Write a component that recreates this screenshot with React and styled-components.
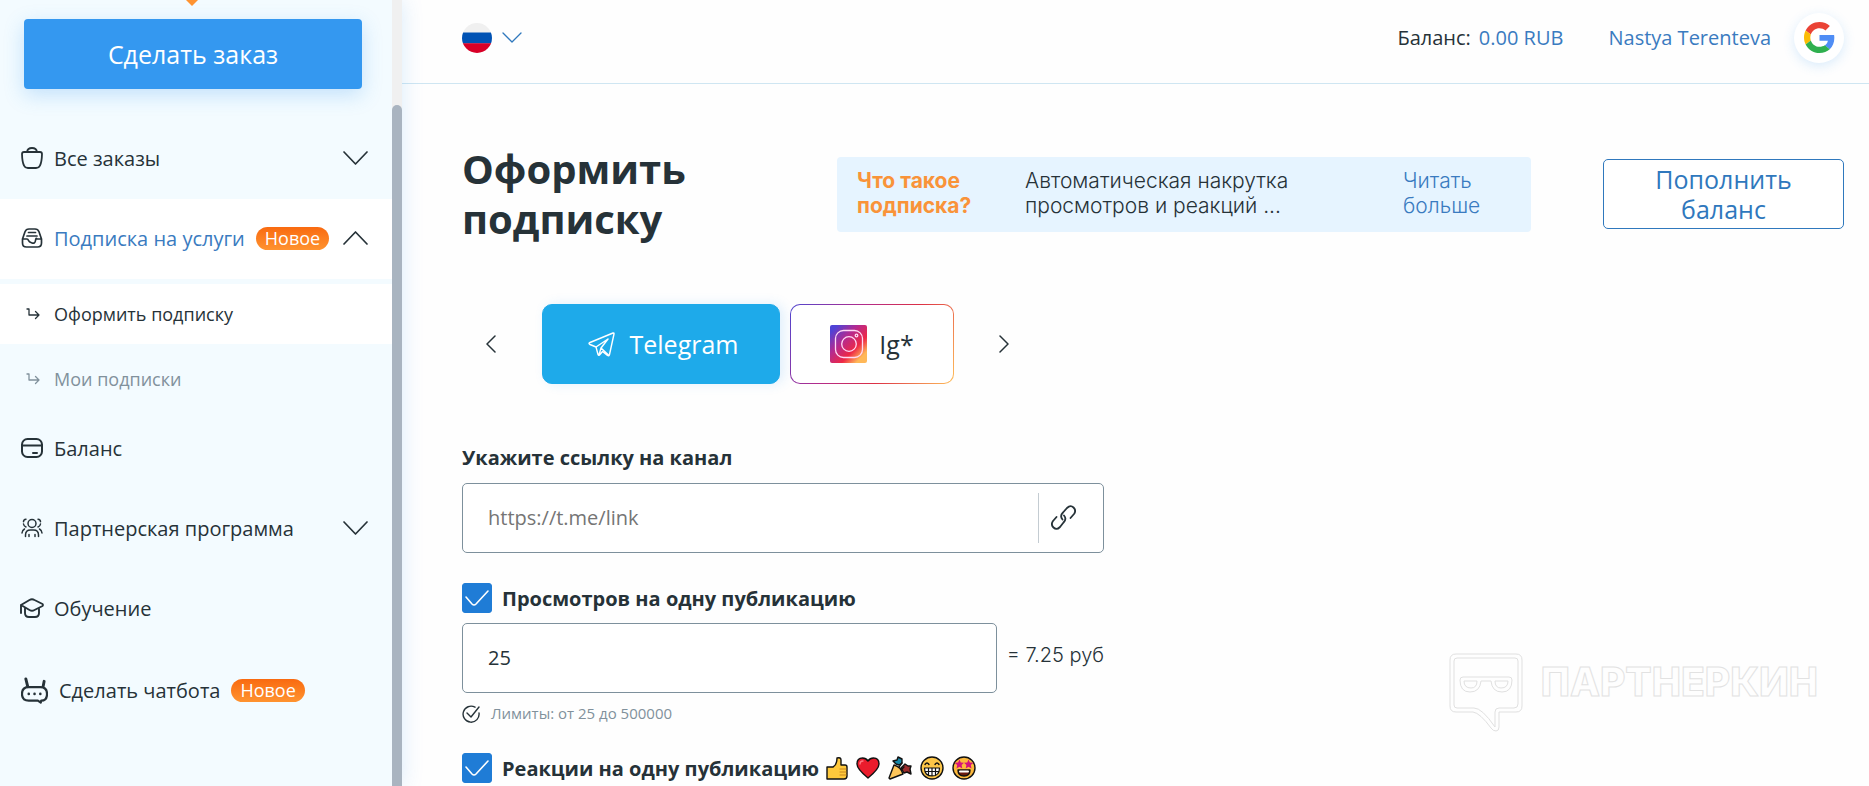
import styled, { createGlobalStyle } from 'styled-components'

const GlobalStyle = createGlobalStyle`
  *, *::before, *::after { box-sizing: border-box; }
  body {
    margin: 0;
    background: #fefefe;
    color: #263238;
    font-family: 'Open Sans', 'Noto Sans', sans-serif;
    font-size: 20px;
    font-weight: 400;
    line-height: 25px;
  }
  button, input { font: inherit; color: inherit; }
  button { cursor: pointer; }
  a { color: inherit; text-decoration: none; }
  svg { display: block; flex: none; }
`

const Page = styled.div`
  display: flex;
  height: 100vh;
  overflow: hidden;
`

/* sidebar */

const Sidebar = styled.aside`
  position: relative;
  flex: none;
  display: flex;
  background: #f3fbff;
  box-shadow: 0 0 20px rgba(52, 152, 240, 0.18);
`

const SidebarBody = styled.div`
  width: 392px;
`

const LogoTip = styled.svg`
  margin: 0 auto 13px;
`

const OrderButton = styled.button`
  display: block;
  width: 338px;
  height: 70px;
  margin: 0 24px 30px;
  padding: 0;
  border: 0;
  border-radius: 4px;
  background: #3498f0;
  color: #fff;
  font-size: 25px;
  box-shadow: 0 6px 20px rgba(52, 152, 240, 0.25);
`

const NavItem = styled.a`
  display: flex;
  align-items: center;
  gap: 11px;
  height: ${({ $tall }) => ($tall ? 84 : 80)}px;
  padding: 0 24px 2px 21px;
  background: ${({ $active }) => ($active ? '#fff' : 'transparent')};
  color: ${({ $active }) => ($active ? '#3a7bc0' : '#263238')};
  white-space: nowrap;

  svg { color: #263238; }
`

const NavToggle = styled.span`
  margin-left: auto;
`

const SubNavItem = styled.a`
  display: flex;
  align-items: center;
  gap: 14px;
  height: 60px;
  margin-top: 5px;
  padding: 0 26px;
  background: ${({ $active }) => ($active ? '#fff' : 'transparent')};
  color: ${({ $active }) => ($active ? '#263238' : '#81919c')};
  font-size: 18px;
`

const Badge = styled.span`
  padding: 0 9px;
  border-radius: 12px;
  background: linear-gradient(#f96a10, #ff9330);
  color: #fff;
  font-size: 18px;
  line-height: 23px;
`

const ScrollTrack = styled.div`
  width: 10px;
  padding-top: 105px;
  background: #f0f0f0;
`

const ScrollThumb = styled.div`
  height: 100%;
  border-radius: 5px 5px 0 0;
  background: #a9b4c0;
`

/* main column */

const Main = styled.main`
  flex: 1;
  min-width: 0;
`

const TopBar = styled.header`
  display: flex;
  align-items: center;
  height: 84px;
  padding: 0 25px 8px 60px;
  border-bottom: 1px solid #cfe6f2;
`

const LangButton = styled.button`
  display: flex;
  align-items: center;
  gap: 10px;
  margin-right: auto;
  padding: 0;
  border: 0;
  background: none;
`

const BalanceLine = styled.span`
  display: flex;
  gap: 8px;
  margin-right: 45px;
`

const BlueLink = styled.a`
  color: #3a7bc0;
`

const Avatar = styled.a`
  display: grid;
  place-items: center;
  width: 50px;
  height: 50px;
  margin-left: 23px;
  border-radius: 50%;
  background: #fff;
  box-shadow: 0 3px 12px rgba(52, 152, 240, 0.18);
`

const Content = styled.div`
  padding: 60px 25px 0 60px;
`

const Heading = styled.div`
  display: flex;
  align-items: center;
  gap: 72px;
`

const Title = styled.h1`
  width: 303px;
  margin: 0;
  font-size: 40px;
  font-weight: 700;
  line-height: 50px;
`

const InfoBox = styled.div`
  flex: 1;
  display: flex;
  align-items: center;
  height: 75px;
  padding: 0 20px 2px;
  border-radius: 4px;
  background: #e6f4ff;
  font-family: Inter, 'Open Sans', sans-serif;
  font-size: 21px;
  font-weight: 300;
`

const InfoQuestion = styled.strong`
  width: 168px;
  padding-right: 30px;
  color: #f99339;
  font-weight: 700;
`

const InfoText = styled.span`
  width: 378px;
  padding-right: 80px;
`

const InfoLink = styled(BlueLink)`
  width: 90px;
`

const TopUpButton = styled.button`
  width: 241px;
  height: 70px;
  padding: 0 40px;
  border: 1px solid #2f78bd;
  border-radius: 5px;
  background: #fff;
  color: #2f78bd;
  font-size: 25px;
  line-height: 30px;
`

const Carousel = styled.div`
  display: flex;
  align-items: center;
  margin: 60px 0 61px;
  padding-left: 22px;
`

const ArrowButton = styled.button`
  display: grid;
  place-items: center;
  width: 14px;
  height: 40px;
  padding: 0;
  border: 0;
  background: none;
`

const Tabs = styled.div`
  display: flex;
  gap: 10px;
  margin: 0 43px 0 44px;
`

const Tab = styled.button`
  display: flex;
  align-items: center;
  justify-content: center;
  height: 80px;
  border: 1px solid transparent;
  border-radius: 10px;
  font-size: 25px;
`

const TelegramTab = styled(Tab)`
  gap: 15px;
  width: 238px;
  padding: 0 6px 0 10px;
  border-color: #1eaaea;
  background: #1eaaea;
  color: #fff;
  box-shadow: 4px 0 12px rgba(52, 152, 240, 0.15);
`

const InstagramTab = styled(Tab)`
  gap: 12px;
  width: 164px;
  background:
    linear-gradient(#fff, #fff) padding-box,
    linear-gradient(120deg, #4f46d0, #b22c8c 35%, #dc3045 62%, #ffc05a) border-box;
`

const Form = styled.form`
  width: 642px;
`

const FieldLabel = styled.label`
  display: block;
  margin-bottom: 13px;
  font-weight: 700;
`

const LinkField = styled.div`
  display: flex;
  align-items: center;
  height: 70px;
  border: 1px solid #7d909c;
  border-radius: 5px;
  background: #fff;
`

const LinkInput = styled.input`
  flex: 1;
  min-width: 0;
  height: 100%;
  padding: 0 25px 2px;
  border: 0;
  background: none;
  outline: none;

  &::placeholder { color: #757575; opacity: 1; }
`

const LinkButton = styled.button`
  height: 50px;
  padding: 0 27px 2px 12px;
  border: 0;
  border-left: 1px solid #c4ccd2;
  background: none;
`

const CheckRow = styled.label`
  display: flex;
  align-items: center;
  gap: 10px;
  margin-top: 30px;
  font-weight: 700;
`

const CheckBox = styled.span`
  display: grid;

  > * { grid-area: 1 / 1; }
  svg { pointer-events: none; }
`

const CheckInput = styled.input`
  appearance: none;
  width: 30px;
  height: 30px;
  margin: 0;
  border: 1px solid #1f7cd6;
  border-radius: 3px;

  &:checked { background: #1f7cd6; }
  &:not(:checked) + svg { visibility: hidden; }
`

const Emojis = styled.span`
  display: flex;
  gap: 8px;
  margin-left: -3px;
`

const CountRow = styled.div`
  display: flex;
  align-items: center;
  gap: 10px;
  margin-top: 10px;
`

const CountInput = styled.input`
  flex: 1;
  min-width: 0;
  height: 70px;
  padding: 0 25px 2px;
  border: 1px solid #7d909c;
  border-radius: 5px;
  background: #fff;
`

const Price = styled.output`
  padding-bottom: 5px;
  font-family: Inter, 'Open Sans', sans-serif;
  font-weight: 300;
`

const Limits = styled.div`
  display: flex;
  align-items: center;
  gap: 11px;
  margin: 10px 0 -1px;
  color: #81919c;
  font-size: 15px;
  line-height: 21px;
`

const Watermark = styled.div`
  position: absolute;
  right: 51px;
  bottom: 53px;
  display: flex;
  gap: 18px;
  color: #fefefe;
  font-family: Inter, sans-serif;
  font-size: 39px;
  font-weight: 800;
  line-height: 58px;
  -webkit-text-stroke: 1px #e2e2e2;
`

const line = { fill: 'none', stroke: 'currentColor', strokeLinecap: 'round', strokeLinejoin: 'round' }

const BagIcon = () => (
  <svg width="22" height="22" viewBox="0 0 22 22" strokeWidth="1.8" {...line}>
    <path d="M3 5h16q2 0 2 2-.2 8-2 11.500-1 2.500-4 2.500H7q-3 0-4-2.500Q1.200 15 1 7q0-2 2-2zM6 5q.5-4 5-4t5 4" />
  </svg>
)

const InboxIcon = () => (
  <svg width="22" height="20" viewBox="0 0 22 20" strokeWidth="1.7" {...line}>
    <path d="M1.500 11L4 3.800Q5 1 8 1h6q3 0 4 2.800L20.500 11v4q0 4-4 4h-11q-4 0-4-4zM1.500 11H6q1 0 1.500 1.500T11 15t3.500-2.500T16 11h4.500M7.500 4.500h7M6 8h10" />
  </svg>
)

const CardIcon = () => (
  <svg width="22" height="20" viewBox="0 0 22 20" strokeWidth="2" {...line}>
    <rect x="1" y="1" width="20" height="18" rx="5.500" />
    <path d="M1 7.500h20M12 15h4" />
  </svg>
)

const PeopleIcon = () => (
  <svg width="22" height="20" viewBox="0 0 22 20" strokeWidth="1.500" {...line}>
    <circle cx="11" cy="5.500" r="4" />
    <path d="M4.500 18.500v-1.500q0-5 5-5h3q5 0 5 5v1.500M8 18.500v-2M14 18.500v-2M5 1.200q-2.500.3-2.500 2.500M2.500 6q.3 2 2.500 3M17 1.200q2.500.3 2.500 2.500M19.500 6q-.3 2-2.500 3M1 15q0-2.500 2.500-4M21 15q0-2.500-2.500-4" />
  </svg>
)

const CapIcon = () => (
  <svg width="22" height="20" viewBox="1 0 22 20" overflow="visible" strokeWidth="1.900" {...line}>
    <path d="M1 7L9.500 2Q12 .5 14.500 2L22.500 6q1 1 0 2l-8 4q-2.500 1.500-5 0L1 7v8M5 10.500V15q0 4 4 4h6q4 0 4-4v-4.500" />
  </svg>
)

const BotIcon = () => (
  <svg width="27" height="27" viewBox="0 0 28 27" strokeWidth="2.300" {...line}>
    <path d="M5 1.500l2 8M24 4l-1 5" strokeWidth="3" />
    <path d="M8 10h12q7 0 7 7t-6 7l-.5 2-3-2H8q-7 0-7-7t7-7z" />
    <path d="M8 17h.1M14 17h.1M20 17h.1" strokeWidth="2.600" />
  </svg>
)

const SubArrow = () => (
  <svg width="14" height="12" viewBox="0 0 14 12" strokeWidth="1.300" {...line}>
    <path d="M1 1h2v6h10M9.500 3.500L13 7l-3.500 3.500" />
  </svg>
)

const Chevron = ({ up }) => (
  <svg width="25" height="14" viewBox="0 0 25 14" strokeWidth="1.700" {...line}>
    <path d={up ? 'M1 13L12.500 1 24 13' : 'M1 1l11.500 12L24 1'} />
  </svg>
)

const Flag = () => (
  <svg width="30" height="30" viewBox="0 0 30 30">
    <clipPath id="flag"><circle cx="15" cy="15" r="15" /></clipPath>
    <g clipPath="url(#flag)">
      <path fill="#f0f0f0" d="M0 0h30v10H0z" />
      <path fill="#0052b4" d="M0 9.500h30v11H0z" />
      <path fill="#d80027" d="M0 20.300h30V30H0z" />
    </g>
  </svg>
)

const GoogleLogo = () => (
  <svg width="31" height="31" viewBox="0 0 48 48">
    <path fill="#ea4335" d="M24 9.500c3.540 0 6.710 1.220 9.210 3.600l6.850-6.850C35.900 2.380 30.470 0 24 0 14.620 0 6.510 5.380 2.560 13.220l7.980 6.190C12.430 13.720 17.740 9.500 24 9.500z" />
    <path fill="#4f8df5" d="M46.980 24.550c0-1.570-.15-3.090-.38-4.550H24v9.020h12.940c-.58 2.960-2.260 5.480-4.780 7.180l7.730 6c4.510-4.180 7.090-10.360 7.090-17.650z" />
    <path fill="#fbbc05" d="M10.530 28.590c-.48-1.450-.76-2.990-.76-4.590s.27-3.140.76-4.590l-7.980-6.190C.92 16.460 0 20.120 0 24c0 3.880.92 7.540 2.560 10.780l7.970-6.190z" />
    <path fill="#2fb04f" d="M24 48c6.480 0 11.930-2.130 15.890-5.810l-7.730-6c-2.150 1.450-4.920 2.300-8.160 2.300-6.260 0-11.570-4.220-13.470-9.910l-7.980 6.190C6.510 42.620 14.620 48 24 48z" />
  </svg>
)

const PlaneIcon = () => (
  <svg width="27" height="25" viewBox="0 0 27 25" strokeWidth="1.400" {...line}>
    <path d="M25 1L2 10.500q-2 1 0 2L8 15l2 7.500q.5 1.500 1.500.5l3-3.500 5 4q1.500 1 2-1L26 2q.2-1.500-1-1zM8 15L20 7l-7 9 7.500 7M13 16l-2 7" />
  </svg>
)

const InstagramLogo = () => (
  <svg width="37" height="38" viewBox="0 0 37 38" fill="none" stroke="#ffd9f4" strokeWidth="1.300">
    <linearGradient id="ig" x1="0" y1="0" x2="1" y2="1">
      <stop offset=".1" stopColor="#4f43d6" />
      <stop offset=".38" stopColor="#b42a90" />
      <stop offset=".65" stopColor="#ee2846" />
      <stop offset=".85" stopColor="#ffb858" />
    </linearGradient>
    <rect width="37" height="38" rx="2" fill="url(#ig)" stroke="none" />
    <rect x="5.500" y="5.500" width="27" height="27" rx="8" />
    <circle cx="19" cy="19" r="7.300" />
    <circle cx="26.500" cy="10.500" r="1.300" />
  </svg>
)

const ChainIcon = () => (
  <svg width="25" height="25" viewBox="0 0 25 25" strokeWidth="1.800" {...line}>
    <path d="M11.500 14.500q-3-3.500.5-7l4-4.500q3.500-3.500 6.500-.5t.5 6.500l-3.500 4M13 10.500q3 3.500-.5 7l-3.500 4.500q-3.500 3.500-6.500.5t-.5-6.500l3.500-4" />
  </svg>
)

const LimitIcon = () => (
  <svg width="18" height="18" viewBox="0 0 18 18" strokeWidth="1.400" {...line} stroke="#263238">
    <path d="M13 2.200A8 8 0 1 0 17 8M5 8l4 4 8-10" />
  </svg>
)

const ink = { stroke: '#111', strokeWidth: 1.4, strokeLinejoin: 'round', strokeLinecap: 'round' }

const Thumb = () => (
  <svg width="22" height="24" viewBox="0 0 22 24" {...ink}>
    <path fill="#ffc93c" d="M1 11h6q4-2 4-9 4-1 4 2v5h4q2 0 2 2v9q0 3-3 3H1z" />
    <path fill="none" stroke="#c8861e" d="M14 13h6M14 16h6M14 19h6" strokeWidth="1" />
  </svg>
)

const Heart = () => (
  <svg width="24" height="24" viewBox="0 0 24 24" {...ink}>
    <path fill="#ea1c2c" d="M12 22Q1 13 1 8q0-6 5.500-6Q10 2 12 5q2-3 5.500-3Q23 2 23 8q0 5-11 14z" />
    <path fill="none" stroke="#ff7580" d="M4 8q0-3 3-3" />
  </svg>
)

const Popper = () => (
  <svg width="24" height="24" viewBox="0 0 24 24" {...ink}>
    <path fill="#ffc65a" d="M1 22L6 9q7 2 9 9L2 23z" />
    <path fill="#1688a8" d="M8 8L5 5l4-1 1-3 4 2v4l-3 2z" />
    <path fill="#9a2b2b" d="M13 12l4-4 3 2 3 0-1 3 1 5-4-2-3 1z" />
    <path fill="none" d="M11 11l3-4M14 13l2-2" />
  </svg>
)

const Grin = () => (
  <svg width="24" height="24" viewBox="0 0 24 24" {...ink}>
    <circle cx="12" cy="12" r="11" fill="#fdc648" />
    <path fill="#fff" strokeWidth="1.200" d="M4.500 12h15q0 8-7.500 8t-7.500-8zM5 15.500h14M8.500 12v7M12 12v8M15.500 12v7" />
    <path fill="none" d="M5 8.500q2-3 4 0M15 8.500q2-3 4 0" />
  </svg>
)

const StarStruck = () => (
  <svg width="24" height="24" viewBox="0 0 24 24" {...ink}>
    <circle cx="12" cy="12" r="11" fill="#fdb93c" />
    <path fill="#6b1a10" d="M6 14h12q0 6-6 6t-6-6z" />
    <path stroke="#fff" strokeWidth="2" d="M8 15.500h8" />
    <path fill="#d5127c" stroke="none" d="M7.500 3.500l1.300 3 3.200.3-2.400 2.200.7 3.500-2.800-1.700-3 1.700.7-3.500L2.500 6.800l3.600-.3zM16.500 3.500l1.400 3 3.600.3-2.700 2.200.7 3.500-3-1.700-2.800 1.700.7-3.500L12 6.800l3.200-.3z" />
  </svg>
)

const MaskLogo = () => (
  <svg width="74" height="80" viewBox="0 0 74 80" fill="none" stroke="#e0e0e0" strokeWidth="1">
    <path d="M7 1h60q6 0 6 6v46q0 6-6 6H50v15q0 4-3 4t-5-3Q31 60 24 59H7q-6 0-6-6V7q0-6 6-6z" />
    <path d="M8 5h58q3 0 3 3v43q0 4-4 4H50q-4 0-4 4v15Q33 55 25 55H8q-3 0-3-3V8q0-3 3-3z" />
    <path d="M14 24h46q3 0 3 3 0 12-10 12-10 0-11-11H32q-1 11-11 11-10 0-10-12 0-3 3-3z" />
    <path d="M15 28h13q0 7-6 7-7 0-7-7zM46 28h13q0 7-7 7-6 0-6-7z" />
  </svg>
)

function Check({ id, children }) {
  return (
    <CheckRow htmlFor={id}>
      <CheckBox>
        <CheckInput type="checkbox" id={id} defaultChecked />
        <svg width="30" height="30" viewBox="0 0 30 30" strokeWidth="1.600" {...line} stroke="#fff">
          <path d="M4 14l6 7q2 2 4 0L26 8" />
        </svg>
      </CheckBox>
      {children}
    </CheckRow>
  )
}

function App() {
  return (
    <>
      <GlobalStyle />
      <Page>
        <Sidebar>
          <SidebarBody>
            <LogoTip width="392" height="6" viewBox="0 0 392 6">
              <path fill="#ff9330" d="M186 0h12l-6 6z" />
            </LogoTip>
            <OrderButton>Сделать заказ</OrderButton>
            <nav>
              <NavItem href="#orders">
                <BagIcon />
                Все заказы
                <NavToggle><Chevron /></NavToggle>
              </NavItem>
              <NavItem href="#subscriptions" $active>
                <InboxIcon />
                Подписка на услуги
                <Badge>Новое</Badge>
                <NavToggle><Chevron up /></NavToggle>
              </NavItem>
              <SubNavItem href="#subscribe" $active>
                <SubArrow />
                Оформить подписку
              </SubNavItem>
              <SubNavItem href="#my">
                <SubArrow />
                Мои подписки
              </SubNavItem>
              <NavItem href="#balance">
                <CardIcon />
                Баланс
              </NavItem>
              <NavItem href="#partners">
                <PeopleIcon />
                Партнерская программа
                <NavToggle><Chevron /></NavToggle>
              </NavItem>
              <NavItem href="#learn">
                <CapIcon />
                Обучение
              </NavItem>
              <NavItem href="#bot" $tall>
                <BotIcon />
                Сделать чатбота
                <Badge>Новое</Badge>
              </NavItem>
            </nav>
          </SidebarBody>
          <ScrollTrack><ScrollThumb /></ScrollTrack>
        </Sidebar>

        <Main>
          <TopBar>
            <LangButton aria-label="Русский">
              <Flag />
              <svg width="20" height="11" viewBox="0 0 20 11" strokeWidth="1.300" {...line} stroke="#2f78bd">
                <path d="M1 1l9 9 9-9" />
              </svg>
            </LangButton>
            <BalanceLine>
              Баланс: <BlueLink href="#balance">0.00 RUB</BlueLink>
            </BalanceLine>
            <BlueLink href="#profile">Nastya Terenteva</BlueLink>
            <Avatar href="#profile" aria-label="Google"><GoogleLogo /></Avatar>
          </TopBar>

          <Content>
            <Heading>
              <Title>Оформить подписку</Title>
              <InfoBox>
                <InfoQuestion>Что такое подписка?</InfoQuestion>
                <InfoText>Автоматическая накрутка просмотров и реакций ...</InfoText>
                <InfoLink href="#more">Читать больше</InfoLink>
              </InfoBox>
              <TopUpButton>Пополнить баланс</TopUpButton>
            </Heading>

            <Carousel>
              <ArrowButton aria-label="Назад">
                <svg width="10" height="18" viewBox="0 0 10 18" strokeWidth="1.500" {...line}>
                  <path d="M9 1L1 9l8 8" />
                </svg>
              </ArrowButton>
              <Tabs>
                <TelegramTab><PlaneIcon />Telegram</TelegramTab>
                <InstagramTab><InstagramLogo />Ig*</InstagramTab>
              </Tabs>
              <ArrowButton aria-label="Вперед">
                <svg width="10" height="18" viewBox="0 0 10 18" strokeWidth="1.500" {...line}>
                  <path d="M1 1l8 8-8 8" />
                </svg>
              </ArrowButton>
            </Carousel>

            <Form>
              <FieldLabel htmlFor="channel">Укажите ссылку на канал</FieldLabel>
              <LinkField>
                <LinkInput id="channel" placeholder="https://t.me/link" />
                <LinkButton type="button" aria-label="Вставить ссылку"><ChainIcon /></LinkButton>
              </LinkField>

              <Check id="views">Просмотров на одну публикацию</Check>
              <CountRow>
                <CountInput aria-label="Просмотров на одну публикацию" defaultValue="25" />
                <Price>= 7.25 руб</Price>
              </CountRow>
              <Limits><LimitIcon />Лимиты: от 25 до 500000</Limits>

              <Check id="reactions">
                Реакции на одну публикацию
                <Emojis>
                  <Thumb />
                  <Heart />
                  <Popper />
                  <Grin />
                  <StarStruck />
                </Emojis>
              </Check>
            </Form>
          </Content>
        </Main>

        <Watermark>
          <MaskLogo />
          ПАРТНЕРКИН
        </Watermark>
      </Page>
    </>
  )
}

export default App
